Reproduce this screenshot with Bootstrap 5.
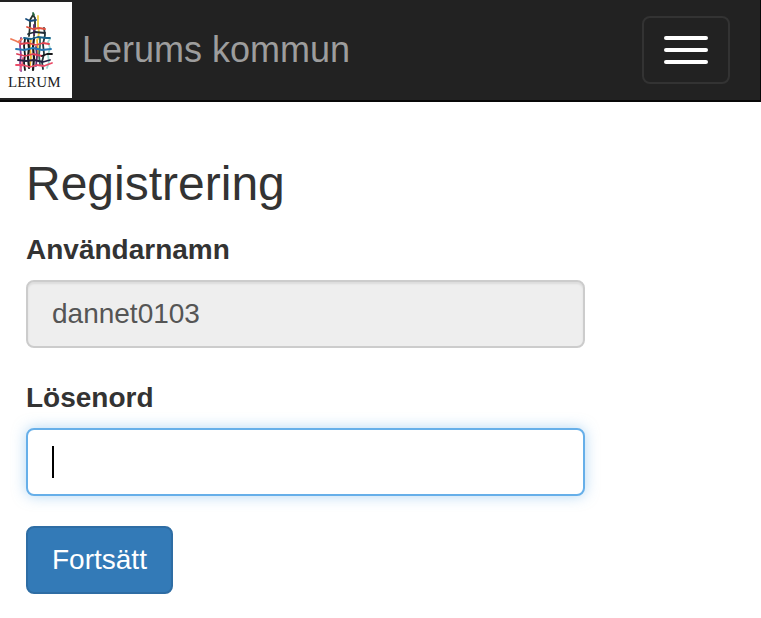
<!DOCTYPE html>
<html lang="sv">
<head>
<meta charset="utf-8">
<meta name="viewport" content="width=device-width, initial-scale=1">
<title>Registrering - Lerums kommun</title>
<link href="https://cdn.jsdelivr.net/npm/bootstrap@5.3.0/dist/css/bootstrap.min.css" rel="stylesheet">
<style>
body { font-family: "Liberation Sans", Arial, sans-serif; font-size: 28px; line-height: 40px; color: #333; background: #fff; }
.site-bar { background: #222; border-bottom: 2px solid #080808; border-right: 1px solid #080808; min-height: 102px; }
.site-brand { gap: 10px; color: #9d9d9d; font-size: 36px; line-height: 40px; }
.site-brand:hover { color: #fff; }
.site-logo { width: 72px; height: 96px; background: #fff; }
.menu-button { width: 88px; height: 68px; margin-right: 30px; border: 2px solid #333; border-radius: 8px; gap: 8px; }
.menu-button span { width: 44px; height: 4px; border-radius: 2px; background: #fff; }
.page-body { padding: 56px 26px 24px; }
.page-title { font-size: 48px; line-height: 52px; margin-bottom: 20px; }
.field-label { line-height: 40px; margin-bottom: 10px; }
.field-box { max-width: 559px; margin-bottom: 30px; }
.field-box .form-control { height: 68px; padding: 12px 24px; font-size: 28px; line-height: 40px; color: #555; border: 2px solid #ccc; border-radius: 8px; box-shadow: inset 0 2px 2px rgba(0,0,0,.075); }
.field-box .form-control[readonly] { background: #eee; }
.field-box .password-input, .field-box .password-input:focus { border-color: #66afe9; caret-color: transparent; box-shadow: 0 0 14px rgba(102,175,233,.5); }
.text-caret { left: 26px; top: 18px; width: 2px; height: 32px; background: #000; pointer-events: none; }
.submit-button { height: 68px; padding: 12px 24px; font-size: 28px; line-height: 40px; color: #fff; background: #337ab7; border: 2px solid #2e6da4; border-radius: 8px; }
.submit-button:hover { color: #fff; background: #286090; }
</style>
</head>
<body>
<nav class="site-bar d-flex align-items-center justify-content-between">
  <a class="site-brand d-flex align-items-center text-decoration-none" href="#">
    <svg class="site-logo" viewBox="0 2 72 96" aria-hidden="true">
      <g fill="none" stroke-width="1.8" stroke-linecap="round" stroke-linejoin="round">
        <path stroke="#f0cf4a" d="M38 16 L38 26 L39 32 L38 39"/>
        <path stroke="#f3b62e" d="M31 39 L30 47 L31 57 L30 66 M37 40 L38 50 L37 58"/>
        <path stroke="#9ed6d0" d="M50 39 L48 42 L50 48 L48 55 L49 62 L47 68"/>
        <path stroke="#8c3b91" d="M21 38 L20 46 L21 55 L20 63 L21 71"/>
        <path stroke="#e8628a" d="M23 58 L22 65 L20 70"/>
        <path stroke="#17191b" d="M25 39 L24 46 L25 55 L24 63 L25 70"/>
        <path stroke="#17191b" d="M28 39 L29 48 L28 57 L29 68" stroke-width="2.2"/>
        <path stroke="#17191b" d="M34 38 L33 47 L34 58 L33 70" stroke-width="2.2"/>
        <path stroke="#26352c" d="M29 36 L30 26 L30 20 L33 15 L35 18 L35 27 L34 36"/>
        <path stroke="#23673e" d="M33 13 L34 15"/>
        <path stroke="#602b73" d="M34 25 L34 34 M36 47 L37 56 L36 66"/>
        <path stroke="#23373e" d="M44 28 L45 35 L43 44 L44 54 L42 62 L43 69"/>
        <path stroke="#2f6a60" d="M40 38 L40 46 L39 55 L40 65"/>
        <path stroke="#164c7d" d="M26 19 L30 21 L36 20"/>
        <path stroke="#df503f" d="M27 27 L33 29 L39 28 L45 29"/>
        <path stroke="#202b36" d="M28 34 L35 32 L45 33"/>
        <path stroke="#17618c" d="M24 38 L31 39 L38 37 L46 38 L50 38"/>
        <path stroke="#f07a58" d="M11 39 L16 41 L20 43 M18 42 L22 39"/>
        <path stroke="#df4450" d="M20 44 L28 43 L36 45 L43 43 L49 44"/>
        <path stroke="#2577b2" d="M16 49 L24 50 L33 48 L42 50 L51 49"/>
        <path stroke="#dc3c56" d="M17 54 L25 56 L33 54 L42 56"/>
        <path stroke="#17191b" d="M42 56 L47 54 L52 54"/>
        <path stroke="#262342" d="M18 60 L26 61 L34 60 L43 62 L50 60"/>
        <path stroke="#ec4d69" d="M16 65 L23 65 L30 67 L37 65 L44 66 L52 63"/>
      </g>
      <text x="8" y="87" font-family="Liberation Serif, serif" font-size="15" fill="#222">LERUM</text>
    </svg>
    <span>Lerums kommun</span>
  </a>
  <button class="menu-button btn p-0 d-flex flex-column align-items-center justify-content-center" type="button" aria-label="Visa meny">
    <span></span><span></span><span></span>
  </button>
</nav>
<main class="page-body">
  <h2 class="page-title fw-normal">Registrering</h2>
  <form>
    <div class="field-box">
      <label class="field-label d-block fw-bold" for="username">Användarnamn</label>
      <input class="form-control" id="username" type="text" value="dannet0103" readonly>
    </div>
    <div class="field-box">
      <label class="field-label d-block fw-bold" for="password">Lösenord</label>
      <div class="position-relative">
        <input class="form-control password-input" id="password" type="password" autofocus>
        <span class="text-caret position-absolute" aria-hidden="true"></span>
      </div>
    </div>
    <button class="submit-button btn" type="submit">Fortsätt</button>
  </form>
</main>
<script src="https://cdn.jsdelivr.net/npm/bootstrap@5.3.0/dist/js/bootstrap.bundle.min.js"></script>
</body>
</html>
